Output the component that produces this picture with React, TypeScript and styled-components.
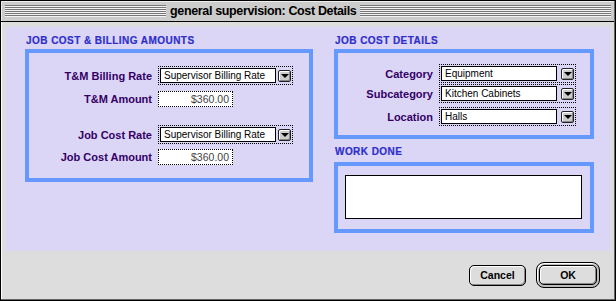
import styled, { createGlobalStyle } from "styled-components";

const GlobalStyle = createGlobalStyle`
  html, body {
    margin: 0;
    padding: 0;
    background: #ffffff;
  }
  body {
    font-family: "Liberation Sans", Arial, sans-serif;
  }
  * {
    box-sizing: border-box;
  }
`;

const Dropdown = ({ value, width }: { value: string; width: number }) => (
  <DropFrame $width={width}>
    <DropField>{value}</DropField>
    <DropArrow>
      <Triangle />
    </DropArrow>
  </DropFrame>
);

export default function App() {
  return (
    <>
      <GlobalStyle />
      <Window>
        <Frame>
          <TitleBar>
            <Stripes $width={161} />
            <Title>general supervision: Cost Details</Title>
            <Stripes />
          </TitleBar>
          <Body>
            <Panel>
              <Column>
                <Heading>Job Cost &amp; Billing Amounts</Heading>
                <Group $height={133} $padTop={13}>
                  <FieldRow $labelWidth={123}>
                    <Label>T&amp;M Billing Rate</Label>
                    <Dropdown value="Supervisor Billing Rate" width={135} />
                  </FieldRow>
                  <FieldRow $labelWidth={123} $top={6}>
                    <Label>T&amp;M Amount</Label>
                    <Amount>$360.00</Amount>
                  </FieldRow>
                  <FieldRow $labelWidth={123} $top={18}>
                    <Label>Job Cost Rate</Label>
                    <Dropdown value="Supervisor Billing Rate" width={135} />
                  </FieldRow>
                  <FieldRow $labelWidth={123} $top={5}>
                    <Label>Job Cost Amount</Label>
                    <Amount>$360.00</Amount>
                  </FieldRow>
                </Group>
              </Column>
              <Column>
                <Heading>Job Cost Details</Heading>
                <Group $height={90} $padTop={11}>
                  <FieldRow $labelWidth={95}>
                    <Label>Category</Label>
                    <Dropdown value="Equipment" width={137} />
                  </FieldRow>
                  <FieldRow $labelWidth={95} $top={1}>
                    <Label>Subcategory</Label>
                    <Dropdown value="Kitchen Cabinets" width={137} />
                  </FieldRow>
                  <FieldRow $labelWidth={95} $top={4}>
                    <Label>Location</Label>
                    <Dropdown value="Halls" width={137} />
                  </FieldRow>
                </Group>
                <Heading $top={7}>Work Done</Heading>
                <Group $height={71} $padTop={9}>
                  <NotesBox />
                </Group>
              </Column>
            </Panel>
            <Footer>
              <Button>Cancel</Button>
              <DefaultRing>
                <Button $fill>OK</Button>
              </DefaultRing>
            </Footer>
          </Body>
        </Frame>
      </Window>
    </>
  );
}

const Window = styled.div`
  width: 616px;
  height: 301px;
  border: 1px solid #000000;
  background: #dddddd;
`;

const Frame = styled.div`
  height: 100%;
  display: flex;
  flex-direction: column;
  border-right: 1px solid #666666;
  border-bottom: 1px solid #666666;
`;

const TitleBar = styled.div`
  height: 21px;
  flex-shrink: 0;
  display: flex;
  align-items: center;
  gap: 4px;
  padding: 0 3px 1px 4px;
  background: #cccccc;
  border-bottom: 1px solid #000000;
  box-shadow: inset 1px 1px 0 #eeeeee;
`;

const Stripes = styled.div<{ $width?: number }>`
  flex: ${(p) => (p.$width ? `0 0 ${p.$width}px` : "1")};
  height: 12px;
  margin-top: 1px;
  background: repeating-linear-gradient(
    to bottom,
    #777777 0px,
    #777777 1px,
    #f4f4f4 1px,
    #f4f4f4 2px
  );
`;

const Title = styled.div`
  font-size: 12.5px;
  font-weight: 700;
  color: #000000;
  white-space: nowrap;
  letter-spacing: -0.35px;
`;

const Body = styled.div`
  flex: 1;
  display: flex;
  flex-direction: column;
  padding: 5px 4px 0 5px;
  box-shadow: inset 1px 0 0 #ffffff;
`;

const Panel = styled.div`
  height: 224px;
  flex-shrink: 0;
  display: grid;
  grid-template-columns: 288px 260px;
  column-gap: 21px;
  align-items: start;
  padding: 8px 15px 0 19px;
  background: #dcd6f6;
`;

const Column = styled.div`
  display: flex;
  flex-direction: column;
`;

const Heading = styled.div<{ $top?: number }>`
  height: 12px;
  line-height: 12px;
  margin: ${(p) => p.$top ?? 0}px 0 2px 1px;
  font-size: 10px;
  font-weight: 700;
  letter-spacing: 0.45px;
  text-transform: uppercase;
  color: #2e2ecc;
  -webkit-text-stroke: 0.2px #2e2ecc;
  & + div {
    margin-top: ${(p) => (p.$top ? 2 : 0)}px;
  }
`;

const Group = styled.div<{ $height: number; $padTop: number }>`
  height: ${(p) => p.$height}px;
  border: 4px solid #6699ff;
  padding: ${(p) => p.$padTop}px 0 0 7px;
  display: flex;
  flex-direction: column;
  align-items: flex-start;
`;

const FieldRow = styled.div<{ $labelWidth: number; $top?: number }>`
  display: grid;
  grid-template-columns: ${(p) => p.$labelWidth}px auto;
  column-gap: 6px;
  align-items: center;
  margin-top: ${(p) => p.$top ?? 0}px;
  margin-left: -7px;
`;

const Label = styled.div`
  text-align: right;
  font-size: 11px;
  font-weight: 700;
  color: #330066;
  white-space: nowrap;
`;

const DropFrame = styled.div<{ $width: number }>`
  width: ${(p) => p.$width}px;
  height: 19px;
  border: 1px dotted #000000;
  display: flex;
  align-items: center;
  justify-content: space-between;
  padding: 0 1px;
`;

const DropField = styled.div`
  width: 116px;
  height: 15px;
  border: 1px solid #000000;
  background: #ffffff;
  padding-left: 3px;
  font-size: 10px;
  line-height: 13px;
  color: #000000;
  white-space: nowrap;
  overflow: hidden;
`;

const DropArrow = styled.div`
  width: 13px;
  height: 12px;
  border: 1px solid #222222;
  border-radius: 2px;
  background: #cccccc;
  box-shadow: inset 1px 1px 0 #ffffff, inset -1px -1px 0 #888888;
  display: flex;
  align-items: center;
  justify-content: center;
`;

const Triangle = styled.div`
  width: 0;
  height: 0;
  border-left: 4px solid transparent;
  border-right: 4px solid transparent;
  border-top: 4px solid #000000;
`;

const Amount = styled.div`
  width: 75px;
  height: 16px;
  border: 1px dotted #000000;
  background: #ffffff;
  padding-right: 3px;
  text-align: right;
  font-size: 10.5px;
  line-height: 14px;
  color: #444444;
`;

const NotesBox = styled.div`
  width: 237px;
  height: 44px;
  border: 1px solid #000000;
  background: #ffffff;
`;

const Footer = styled.div`
  flex: 1;
  display: flex;
  align-items: center;
  justify-content: flex-end;
  gap: 10px;
  padding-right: 10px;
`;

const Button = styled.div<{ $fill?: boolean }>`
  width: ${(p) => (p.$fill ? "100%" : "57px")};
  height: ${(p) => (p.$fill ? "100%" : "21px")};
  border: 1px solid #000000;
  border-radius: 5px;
  background: #dddddd;
  box-shadow: inset 1px 1px 0 #ffffff, inset -1px -1px 0 #888888;
  display: flex;
  align-items: center;
  justify-content: center;
  font-size: 10.5px;
  font-weight: 700;
  color: #000000;
`;

const DefaultRing = styled.div`
  width: 64px;
  height: 26px;
  border: 1px solid #000000;
  border-radius: 8px;
  padding: 2px;
  background: #bbbbbb;
  box-shadow: inset 1px 1px 0 #ffffff;
`;
